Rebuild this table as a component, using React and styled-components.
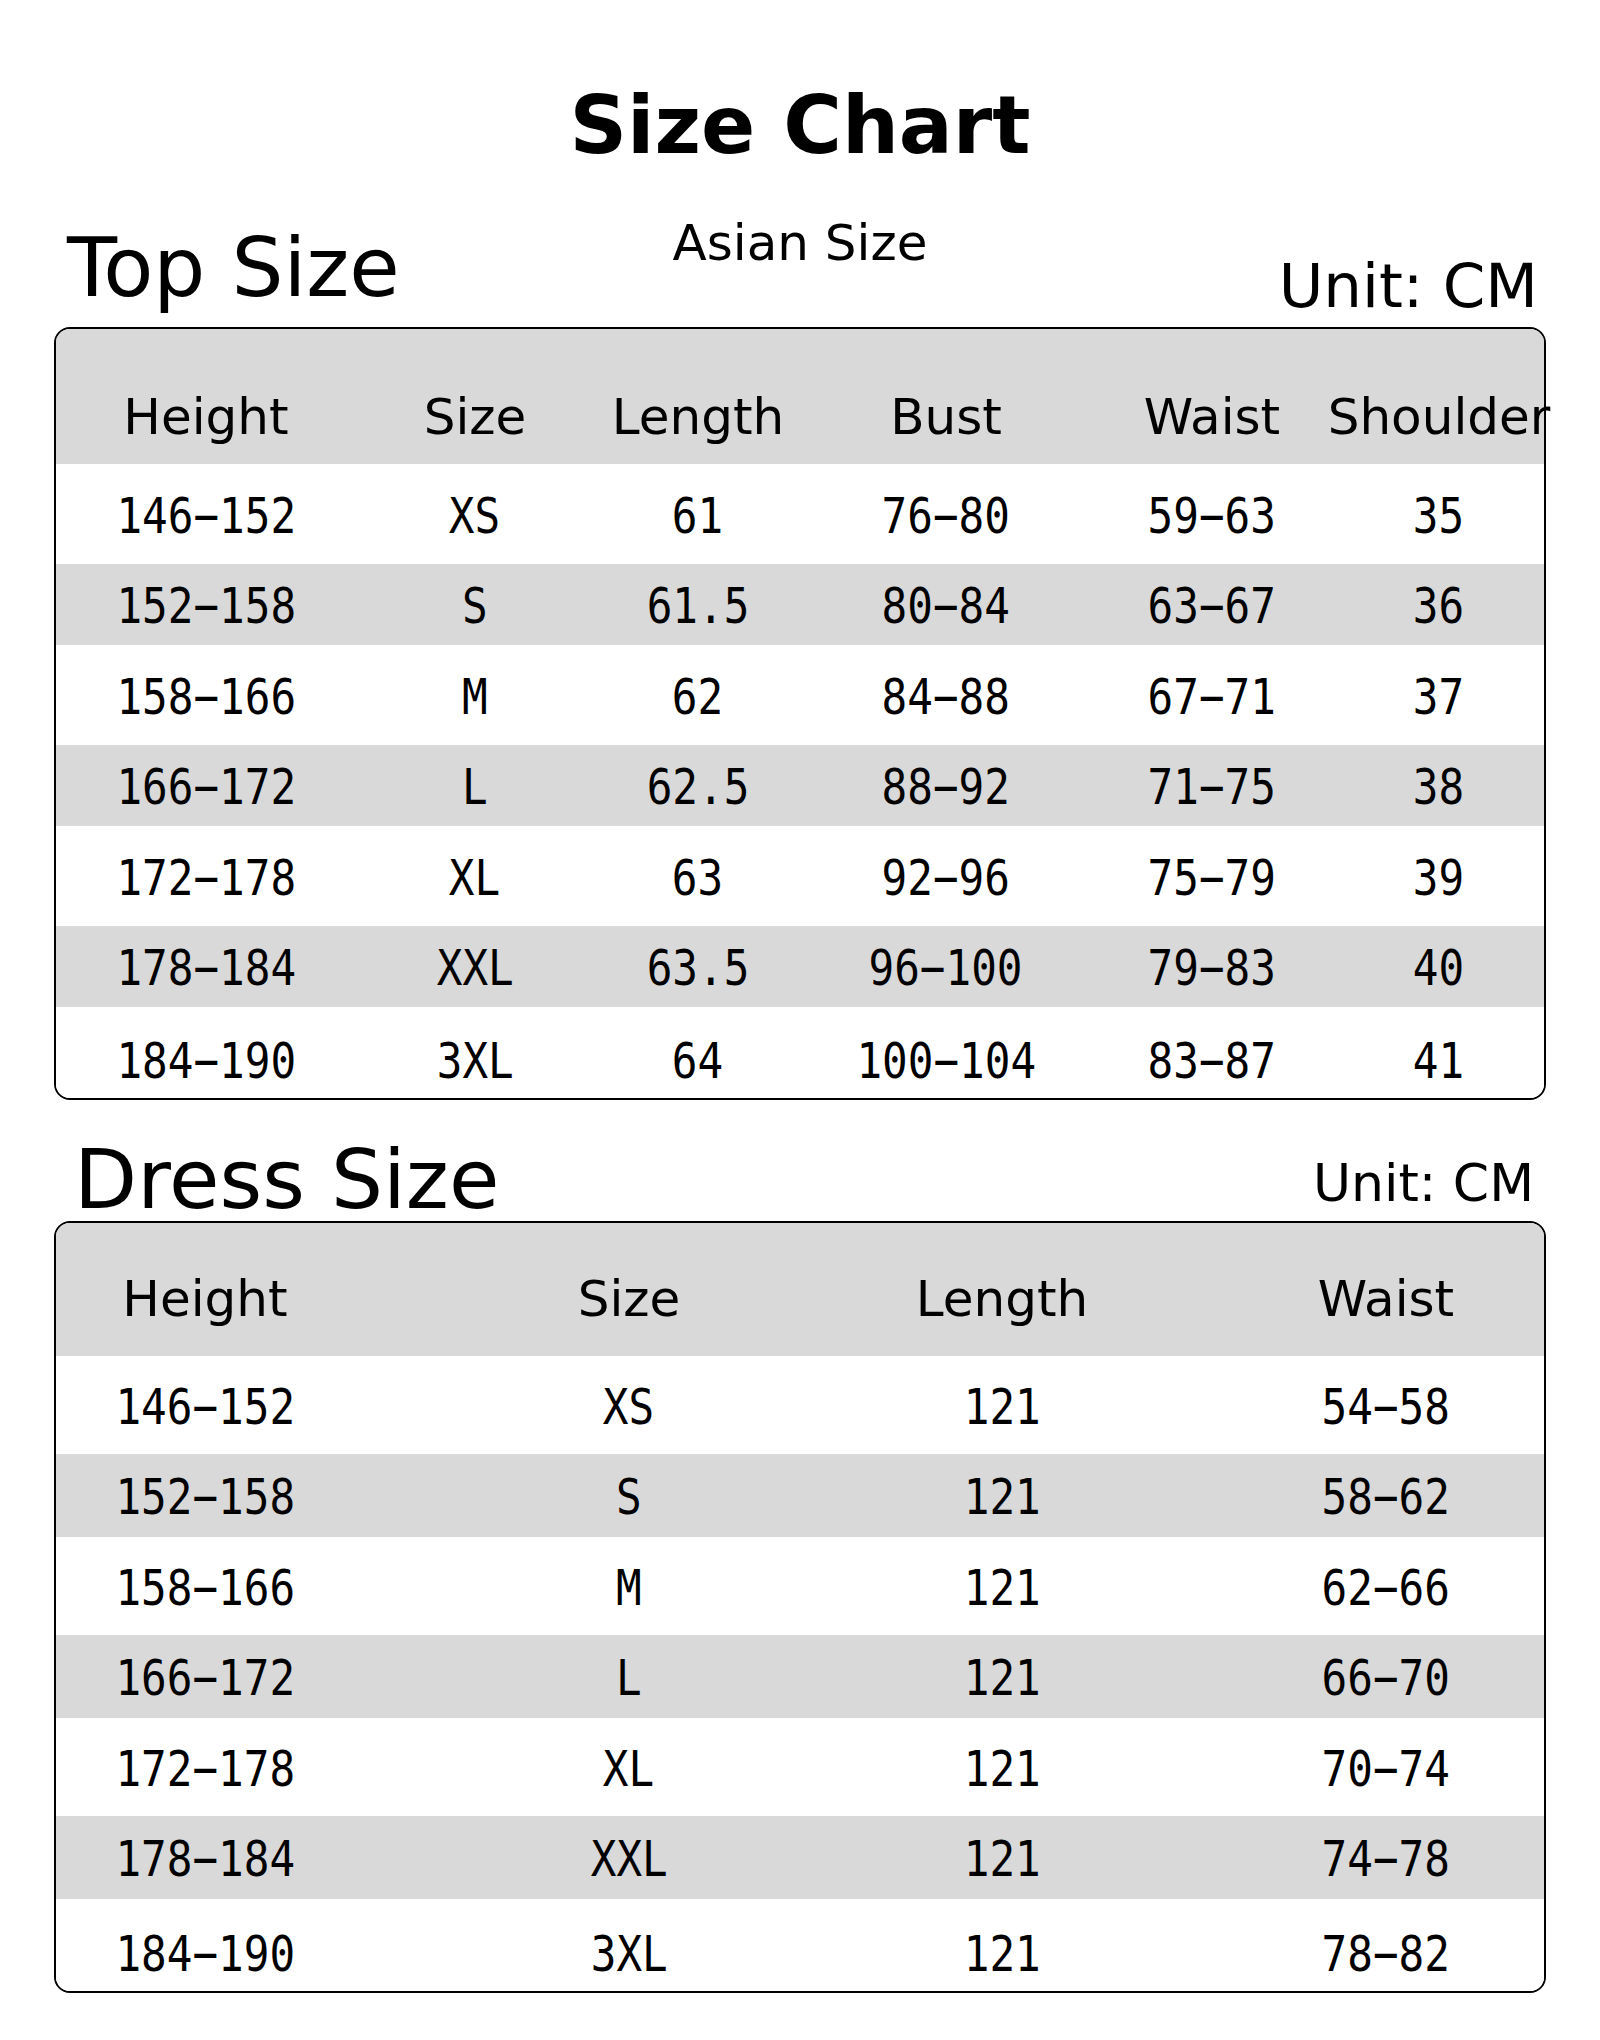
import styled, { createGlobalStyle } from 'styled-components';

const GlobalStyle = createGlobalStyle`
  html, body {
    margin: 0;
    padding: 0;
    background: #fff;
  }
  body {
    font-family: "DejaVu Sans", Verdana, sans-serif;
    color: #000;
  }
`;

const Page = styled.div`
  width: 1600px;
  height: 2040px;
  background: #fff;
  overflow: hidden;
`;

const Title = styled.h1`
  margin: 86px 0 0;
  font-size: 80px;
  font-weight: 700;
  line-height: 1;
  text-align: center;
`;

const SectionHead = styled.div`
  display: grid;
  grid-template-columns: 1fr auto 1fr;
  align-items: start;
  margin-top: ${(p) => p.$top}px;
`;

const SectionName = styled.h2`
  margin: 0 0 0 ${(p) => p.$indent}px;
  padding-top: ${(p) => p.$drop}px;
  font-size: 82px;
  font-weight: 400;
  line-height: 1;
  white-space: nowrap;
`;

const Subtitle = styled.div`
  padding-top: ${(p) => p.$drop}px;
  font-size: 50px;
  line-height: 1;
  white-space: nowrap;
`;

const Unit = styled.div`
  justify-self: end;
  margin-right: ${(p) => p.$right}px;
  padding-top: ${(p) => p.$drop}px;
  font-size: ${(p) => p.$size}px;
  line-height: 1;
  white-space: nowrap;
`;

const Table = styled.div`
  margin: ${(p) => p.$top}px 0 0 54px;
  width: 1492px;
  box-sizing: border-box;
  border: 2px solid #000;
  border-radius: 16px;
`;

const Row = styled.div`
  display: grid;
  grid-template-columns: ${(p) => p.$cols};
  align-items: ${(p) => (p.$head ? 'start' : 'center')};
  height: ${(p) => p.$h}px;
  box-sizing: border-box;
  padding-top: ${(p) => p.$pt || 0}px;
  background: ${(p) => (p.$shade ? '#d9d9d9' : '#fff')};
  border-radius: ${(p) =>
    p.$head ? '14px 14px 0 0' : p.$last ? '0 0 14px 14px' : '0'};
`;

const Cell = styled.div`
  display: flex;
  justify-content: center;
  min-width: 0;
  padding-left: ${(p) => p.$shift || 0}px;
  white-space: nowrap;
  line-height: 1;
`;

const HeadText = styled.span`
  font-size: 50px;
`;

/* monospaced, slightly condensed figures */
const Value = styled.span`
  display: inline-block;
  font-family: "DejaVu Sans Mono", "Liberation Mono", monospace;
  font-size: 49px;
  transform: scaleX(0.87);
  margin-top: 4px;
`;

const topCols = '300px 238px 208px 288px 244px minmax(0, 1fr)';
const dressCols = '298px 550px 196px minmax(0, 1fr)';

const topHead = ['Height', 'Size', 'Length', 'Bust', 'Waist', 'Shoulder'];
const topRows = [
  ['146-152', 'XS', '61', '76-80', '59-63', '35'],
  ['152-158', 'S', '61.5', '80-84', '63-67', '36'],
  ['158-166', 'M', '62', '84-88', '67-71', '37'],
  ['166-172', 'L', '62.5', '88-92', '71-75', '38'],
  ['172-178', 'XL', '63', '92-96', '75-79', '39'],
  ['178-184', 'XXL', '63.5', '96-100', '79-83', '40'],
  ['184-190', '3XL', '64', '100-104', '83-87', '41'],
];

const dressHead = ['Height', 'Size', 'Length', 'Waist'];
const dressRows = [
  ['146-152', 'XS', '121', '54-58'],
  ['152-158', 'S', '121', '58-62'],
  ['158-166', 'M', '121', '62-66'],
  ['166-172', 'L', '121', '66-70'],
  ['172-178', 'XL', '121', '70-74'],
  ['178-184', 'XXL', '121', '74-78'],
  ['184-190', '3XL', '121', '78-82'],
];

const SizeTable = ({ top, cols, head, rows, headH, headPad, whiteH, grayH, lastH, shifts = [] }) => (
  <Table $top={top}>
    <Row $cols={cols} $head $shade $h={headH} $pt={headPad}>
      {head.map((h, i) => (
        <Cell key={h} $shift={shifts[i]}>
          <HeadText>{h}</HeadText>
        </Cell>
      ))}
    </Row>
    {rows.map((r, idx) => {
      const last = idx === rows.length - 1;
      const shade = idx % 2 === 1;
      return (
        <Row
          key={r[0]}
          $cols={cols}
          $shade={shade}
          $last={last}
          $h={last ? lastH : shade ? grayH : whiteH}
          $pt={last ? 14 : 0}
        >
          {r.map((v, i) => (
            <Cell key={i} $shift={shifts[i]}>
              <Value>{v.replace('-', '\u2212')}</Value>
            </Cell>
          ))}
        </Row>
      );
    })}
  </Table>
);

export default function App() {
  return (
    <Page>
      <GlobalStyle />
      <Title>Size Chart</Title>

      <SectionHead $top={0}>
        <SectionName $indent={67} $drop={61}>Top Size</SectionName>
        <Subtitle $drop={52}>Asian Size</Subtitle>
        <Unit $right={62} $drop={89} $size={61}>Unit: CM</Unit>
      </SectionHead>

      <SizeTable
        top={11}
        cols={topCols}
        head={topHead}
        rows={topRows}
        headH={135}
        headPad={63}
        whiteH={100}
        grayH={81}
        lastH={91}
      />

      <SectionHead $top={39}>
        <SectionName $indent={74} $drop={0}>Dress Size</SectionName>
        <span />
        <Unit $right={66} $drop={18} $size={52}>Unit: CM</Unit>
      </SectionHead>

      <SizeTable
        top={0}
        cols={dressCols}
        head={dressHead}
        rows={dressRows}
        headH={133}
        headPad={51}
        whiteH={98}
        grayH={83}
        lastH={92}
        shifts={[0, 0, 0, 128]}
      />
    </Page>
  );
}
